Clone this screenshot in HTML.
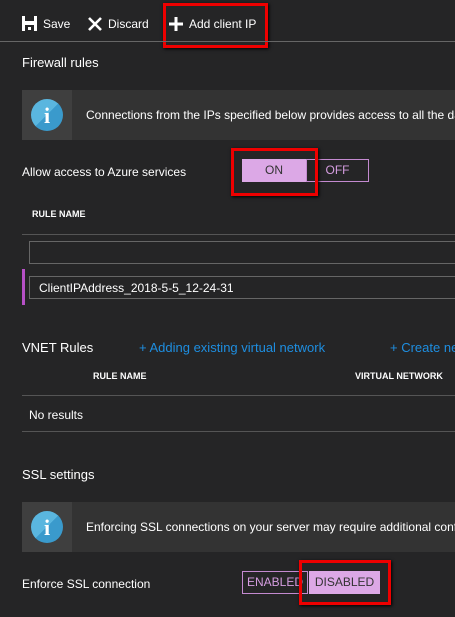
<!DOCTYPE html>
<html><head><meta charset="utf-8"><style>
*{margin:0;padding:0;box-sizing:border-box}
html,body{width:455px;height:617px;overflow:hidden}
body{background:#252526;color:#fff;font-family:"Liberation Sans",sans-serif;font-size:12px;position:relative}
#w{position:absolute;left:0;top:0;width:455px;height:617px;overflow:hidden}
.a{position:absolute;white-space:nowrap}
.info{position:absolute;left:22px;width:433px;height:50px;background:#333;overflow:hidden}
.info .ic{position:absolute;left:0;top:0;width:50px;height:50px;background:#3f3f3f}
.info .c{position:absolute;left:9px;top:9px;width:32px;height:32px;border-radius:50%;background:linear-gradient(135deg,#5ab6df 50%,#3a9acc 50%);color:#fff;font:bold 22px "Liberation Serif",serif;text-align:center;line-height:33px}
.info .t{position:absolute;left:64px;top:18px;font-size:12px;white-space:nowrap}
.red{position:absolute;border:3px solid #e00;box-shadow:1px 1px 3px #000}
.hdr{font-size:9px;font-weight:bold}
.line{position:absolute;height:1px;background:#555}
.clip{overflow:hidden}
</style></head><body><div id="w">
<div class="a" style="left:22px;top:16px;width:15px;height:15px;background:#fff"></div>
<div class="a" style="left:25px;top:16px;width:9px;height:5px;background:#252526"></div>
<div class="a" style="left:25px;top:25px;width:9px;height:6px;background:#252526"></div>
<div class="a" style="left:28px;top:27px;width:3px;height:3px;background:#fff"></div>
<div class="a" style="left:43px;top:17px;font-size:12px">Save</div>
<svg class="a" style="left:88px;top:17px" width="14" height="14"><path d="M1 1L13 13M13 1L1 13" stroke="#fff" stroke-width="2.6"/></svg>
<div class="a" style="left:108px;top:17px">Discard</div>
<svg class="a" style="left:169px;top:17px" width="14" height="14"><path d="M7 0V14M0 7H14" stroke="#fff" stroke-width="3"/></svg>
<div class="a" style="left:189px;top:17px">Add client IP</div>
<div class="red" style="left:163px;top:3px;width:105px;height:45px"></div>
<div class="line" style="left:0;top:41px;width:455px;background:#666"></div>
<div class="a" style="left:22px;top:55px;font-size:13px">Firewall rules</div>
<div class="info" style="top:90px"><div class="ic"><div class="c">i</div></div><div class="t">Connections from the IPs specified below provides access to all the databases</div></div>
<div class="a" style="left:22px;top:165px">Allow access to Azure services</div>
<div class="a" style="left:242px;top:159px;width:64px;height:23px;background:#dca8e6;color:#333;text-align:center;line-height:23px">ON</div>
<div class="a" style="left:306px;top:159px;width:63px;height:23px;border:1px solid #c48ad0;color:#d59de0;text-align:center;line-height:21px">OFF</div>
<div class="red" style="left:231px;top:148px;width:87px;height:48px"></div>
<div class="a hdr" style="left:32px;top:209px">RULE NAME</div>
<div class="line" style="left:22px;top:234px;width:433px"></div>
<div class="a" style="left:29px;top:241px;width:426px;height:23px;border:1px solid #666;border-right:none"></div>
<div class="a" style="left:22px;top:269px;width:3px;height:36px;background:#b650c6"></div>
<div class="a clip" style="left:29px;top:276px;width:426px;height:23px;border:1px solid #666;border-right:none;padding:4px 9px;font-size:12px">ClientIPAddress_2018-5-5_12-24-31</div>
<div class="a" style="left:22px;top:340px;font-size:13px">VNET Rules</div>
<div class="a" style="left:139px;top:340px;font-size:13px;color:#1e8ee0">+ Adding existing virtual network</div>
<div class="a clip" style="left:390px;top:340px;width:65px;font-size:13px;color:#1e8ee0">+ Create new virtual network</div>
<div class="a hdr" style="left:93px;top:371px">RULE NAME</div>
<div class="a hdr" style="left:355px;top:371px">VIRTUAL NETWORK</div>
<div class="line" style="left:22px;top:395px;width:433px"></div>
<div class="a" style="left:29px;top:408px">No results</div>
<div class="line" style="left:22px;top:431px;width:433px"></div>
<div class="a" style="left:22px;top:467px;font-size:13px">SSL settings</div>
<div class="info" style="top:502px"><div class="ic"><div class="c">i</div></div><div class="t">Enforcing SSL connections on your server may require additional configuration</div></div>
<div class="a" style="left:22px;top:577px">Enforce SSL connection</div>
<div class="a" style="left:242px;top:571px;width:66px;height:23px;border:1px solid #c48ad0;color:#d59de0;text-align:center;line-height:21px">ENABLED</div>
<div class="a" style="left:309px;top:571px;width:71px;height:23px;background:#dca8e6;color:#333;text-align:center;line-height:23px">DISABLED</div>
<div class="red" style="left:299px;top:560px;width:92px;height:45px"></div>
</div></body></html>
